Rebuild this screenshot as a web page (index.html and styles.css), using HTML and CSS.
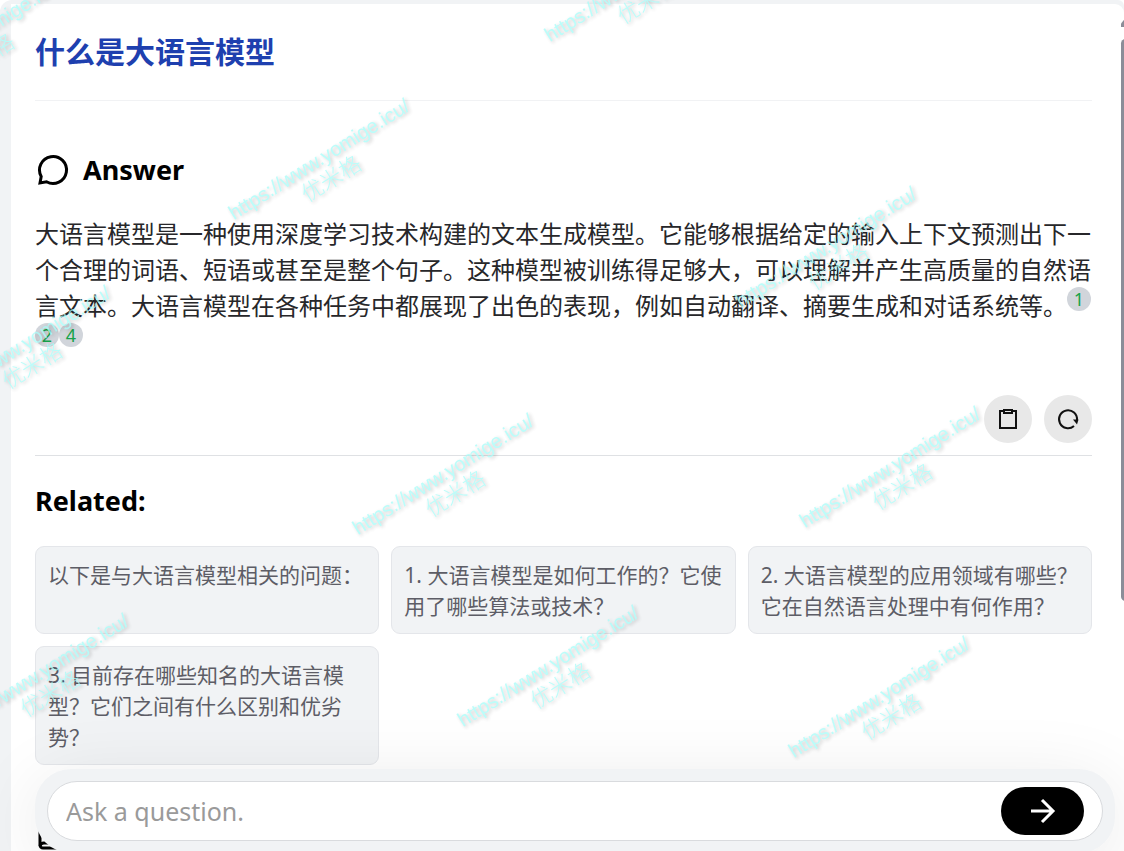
FILE: index.html
```
<!DOCTYPE html>
<html lang="zh-CN">
<head>
  <meta charset="UTF-8">
  <meta name="viewport" content="width=device-width, initial-scale=1">
  <title>什么是大语言模型</title>
  <link rel="stylesheet" href="styles.css">
</head>
<body>
  <div class="frame">
    <main class="panel">
      <h1 class="title">什么是大语言模型</h1>

      <section class="answer">
        <h2 class="heading">
          <svg class="heading-icon" viewBox="0 0 36 36" fill="none" stroke="#000" stroke-width="3" stroke-linejoin="miter" aria-hidden="true">
            <path d="M5 31L6.200 24.500A13.500 13.500 0 1 1 11.500 29.800Z"/>
          </svg>
          Answer
        </h2>
        <p class="answer-text">大语言模型是一种使用深度学习技术构建的文本生成模型。它能够根据给定的输入上下文预测出下一个合理的词语、短语或甚至是整个句子。这种模型被训练得足够大，可以理解并产生高质量的自然语言文本。大语言模型在各种任务中都展现了出色的表现，例如自动翻译、摘要生成和对话系统等。<a class="cite" href="#source-1">1</a><a class="cite" href="#source-2">2</a><a class="cite" href="#source-4">4</a></p>
        <div class="actions">
          <button class="round-btn" type="button" aria-label="Copy">
            <svg width="24" height="24" viewBox="0 0 24 24" fill="none" stroke="#111" stroke-width="2" aria-hidden="true">
              <path d="M8 4H4v17h16V4h-4"/>
              <path d="M8 3h8v3H8z"/>
            </svg>
          </button>
          <button class="round-btn" type="button" aria-label="Reload">
            <svg width="24" height="24" viewBox="0 0 24 24" fill="none" stroke="#111" stroke-width="2" aria-hidden="true">
              <path d="M18 19A9 9 0 1 1 21 13"/>
              <path d="M17 12.500h5.500L21 17.500z" fill="#111" stroke="none"/>
            </svg>
          </button>
        </div>
      </section>

      <section class="related">
        <h2 class="heading">Related:</h2>
        <div class="cards">
          <a class="card" href="#">以下是与大语言模型相关的问题：</a>
          <a class="card" href="#">1. 大语言模型是如何工作的？它使用了哪些算法或技术？</a>
          <a class="card" href="#">2. 大语言模型的应用领域有哪些？它在自然语言处理中有何作用？</a>
          <a class="card" href="#">3. 目前存在哪些知名的大语言模型？它们之间有什么区别和优劣势？</a>
        </div>
      </section>

      <section class="sources">
        <svg class="heading-icon" viewBox="0 0 36 36" fill="none" stroke="#000" stroke-width="3" aria-hidden="true">
          <path d="M32 4H9a4 4 0 0 0-4 4v20a3 3 0 0 0 3 3h24z"/>
          <path d="M32 26H9a4 4 0 0 0-4 3"/>
        </svg>
      </section>
    </main>
  </div>

  <form class="ask">
    <label class="ask-box">
      <input class="ask-input" type="text" placeholder="Ask a question." aria-label="Ask a question.">
      <button class="send" type="submit" aria-label="Send">
        <svg width="30" height="30" viewBox="0 0 30 30" fill="none" stroke="#fff" stroke-width="3" aria-hidden="true">
          <path d="M3 15h22M14 4l11 11-11 11"/>
        </svg>
      </button>
    </label>
  </form>

  <div class="scroll">
    <span class="scroll-up"></span>
    <span class="scroll-thumb"></span>
  </div>

  <div class="marks" aria-hidden="true">
    <div class="mark m1">https://www.yomige.icu/<span>优米格</span></div>
    <div class="mark m2">https://www.yomige.icu/<span>优米格</span></div>
    <div class="mark m3">https://www.yomige.icu/<span>优米格</span></div>
    <div class="mark m4">https://www.yomige.icu/<span>优米格</span></div>
    <div class="mark m5">https://www.yomige.icu/<span>优米格</span></div>
    <div class="mark m6">https://www.yomige.icu/<span>优米格</span></div>
    <div class="mark m7">https://www.yomige.icu/<span>优米格</span></div>
    <div class="mark m8">https://www.yomige.icu/<span>优米格</span></div>
    <div class="mark m9">https://www.yomige.icu/<span>优米格</span></div>
    <div class="mark m10">https://www.yomige.icu/<span>优米格</span></div>
  </div>
</body>
</html>
```
FILE: styles.css
```
* {
  box-sizing: border-box;
}
body {
  margin: 0;
  height: 100vh;
  overflow: hidden;
  font-family: "Noto Sans", "Noto Sans CJK SC", sans-serif;
  color: #18181b;
  background: #fff;
}
h1, h2, p {
  margin: 0;
}
.frame {
  min-height: 100vh;
  padding: 4px 0 0 11px;
  background: #f1f3f5;
  border-radius: 12px 6px 0 0;
}
.panel {
  min-height: 100vh;
  padding: 24px 32px 0 24px;
  background: #fff;
  border-radius: 0 9px 0 0;
}
.title {
  padding-bottom: 27px;
  border-bottom: 1px solid #f1f2f4;
  font-family: "Noto Sans CJK SC", sans-serif;
  font-size: 30px;
  line-height: 45px;
  font-weight: 700;
  color: #1e40af;
}
.heading {
  display: flex;
  align-items: center;
  gap: 12px;
  font-size: 27px;
  line-height: 42px;
  font-weight: 700;
  color: #000;
}
.heading-icon {
  width: 36px;
  height: 36px;
}

/* answer */
.answer {
  padding: 48px 0 12px;
  border-bottom: 1px solid #dfe1e4;
}
.answer-text {
  margin-top: 24px;
  font-family: "Noto Sans CJK SC", sans-serif;
  font-size: 24px;
  line-height: 36px;
  color: #27272a;
}
.cite {
  display: inline-block;
  width: 24px;
  height: 24px;
  border-radius: 50%;
  background: #d1d5db;
  color: #16a34a;
  font-family: "Noto Sans", sans-serif;
  font-size: 18px;
  line-height: 24px;
  text-align: center;
  text-decoration: none;
  vertical-align: 9px;
}
.actions {
  display: flex;
  justify-content: flex-end;
  gap: 12px;
  margin-top: 36px;
}
.round-btn {
  display: flex;
  align-items: center;
  justify-content: center;
  width: 48px;
  height: 48px;
  padding: 0;
  border: 0;
  border-radius: 50%;
  background: #e8e8e8;
}

/* related questions */
.related {
  padding-top: 24px;
}
.cards {
  display: grid;
  grid-template-columns: repeat(3, 1fr);
  gap: 12px;
  margin-top: 24px;
}
.card {
  padding: 13px 12px 11px;
  border: 1px solid #e4e6ea;
  border-radius: 9px;
  background: #f1f3f5;
  color: #5d5d66;
  font-size: 21px;
  line-height: 31px;
  text-decoration: none;
}
.sources {
  margin-top: 52px;
}

/* question bar */
.ask {
  position: fixed;
  left: 35px;
  right: 9px;
  bottom: -2px;
  padding: 12px;
  border-radius: 36px;
  background: #f1f3f5;
  box-shadow: 0 12px 75px rgba(0, 0, 0, 0.09);
}
.ask-box {
  display: flex;
  align-items: center;
  height: 60px;
  padding: 0 18px;
  border: 1px solid #d9dbde;
  border-radius: 30px;
  background: #fff;
}
.ask-input {
  flex: 1;
  min-width: 0;
  padding: 0;
  border: 0;
  outline: 0;
  background: none;
  font-family: "Noto Sans", sans-serif;
  font-size: 25px;
}
.ask-input::placeholder {
  color: #9a9a9a;
}
.send {
  display: flex;
  align-items: center;
  justify-content: center;
  width: 83px;
  height: 48px;
  padding: 0;
  border: 0;
  border-radius: 24px;
  background: #000;
}

/* scrollbar, cut off by the window edge */
.scroll {
  position: fixed;
  top: 18px;
  right: -6px;
  display: flex;
  flex-direction: column;
  gap: 12px;
  width: 9px;
}
.scroll-up {
  height: 9px;
  background: #8b8d98;
  clip-path: polygon(50% 0, 100% 100%, 0 100%, 0 60%);
}
.scroll-thumb {
  height: 66vh;
  border-radius: 5px;
  background: #8b8d98;
}

/* watermark layer */
.marks {
  position: fixed;
  inset: 0;
  overflow: hidden;
  pointer-events: none;
}
.mark {
  position: absolute;
  width: 240px;
  margin: -13px 0 0 -120px;
  font-family: "Liberation Sans", "Noto Sans CJK SC", sans-serif;
  font-size: 20px;
  line-height: 24px;
  text-align: center;
  color: #a5fcf8;
  opacity: 0.75;
  text-shadow: 1px 2px 4px rgba(0, 0, 0, 0.3);
  transform: rotate(-32deg);
  transform-origin: 120px 12px;
}
.mark span {
  display: block;
  font-size: 22px;
  font-weight: 300;
}
.m1 { left: -28px; top: 38px; }
.m2 { left: 635px; top: -18px; }
.m3 { left: 319px; top: 160px; }
.m4 { left: 826px; top: 248px; }
.m5 { left: 20px; top: 347px; }
.m6 { left: 443px; top: 475px; }
.m7 { left: 890px; top: 468px; }
.m8 { left: 38px; top: 675px; }
.m9 { left: 548px; top: 667px; }
.m10 { left: 879px; top: 698px; }
```
